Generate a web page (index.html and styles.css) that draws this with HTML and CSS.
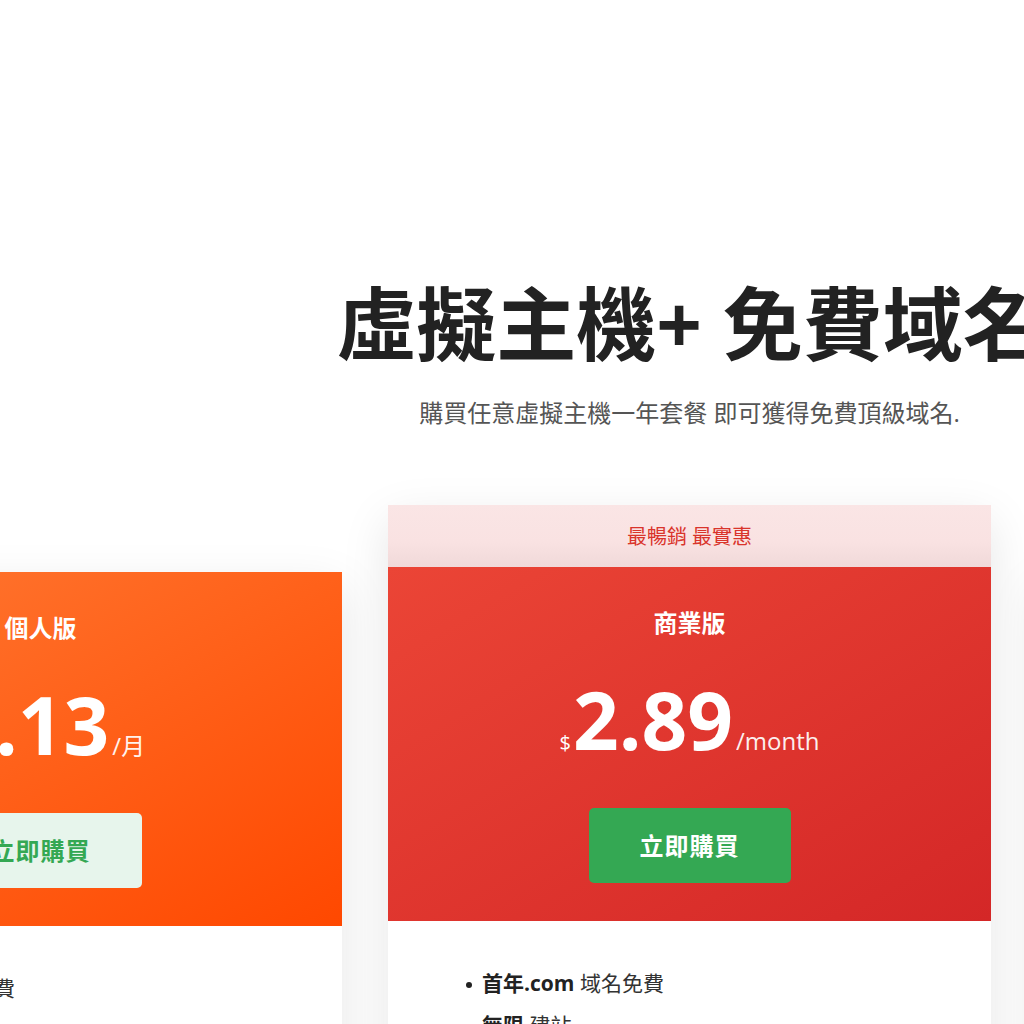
FILE: index.html
```html
<!DOCTYPE html>
<html>
<head>
    <meta charset="utf-8">
    <link rel="stylesheet" href="styles.css">
</head>
<body>
    <section class="pricing">
        <div class="pricing-inner">
            <h1 class="pricing-title">虛擬主機+ 免費域名</h1>
            <p class="pricing-subtitle">購買任意虛擬主機一年套餐 即可獲得免費頂級域名.</p>

            <div class="plans">
                <div class="plan plan-personal">
                    <div class="plan-head">
                        <h3 class="plan-name">個人版</h3>
                        <div class="plan-price"><span class="currency">$</span><span class="amount">1.13</span><span class="period">/月</span></div>
                        <a href="#" class="buy-btn">立即購買</a>
                    </div>
                    <ul class="plan-features">
                        <li><b>首年.com</b> 域名免費</li>
                        <li><b>無限</b> 建站</li>
                        <li><b>10GB</b> SSD 空間</li>
                        <li><b>免費</b> SSL 證書</li>
                    </ul>
                </div>

                <div class="plan plan-business featured">
                    <div class="plan-ribbon">最暢銷 最實惠</div>
                    <div class="plan-head">
                        <h3 class="plan-name">商業版</h3>
                        <div class="plan-price"><span class="currency">$</span><span class="amount">2.89</span><span class="period">/month</span></div>
                        <a href="#" class="buy-btn">立即購買</a>
                    </div>
                    <ul class="plan-features">
                        <li><b>首年.com</b> 域名免費</li>
                        <li><b>無限</b> 建站</li>
                        <li><b>無限</b> SSD 空間</li>
                        <li><b>免費</b> SSL 證書</li>
                    </ul>
                </div>

                <div class="plan plan-enterprise">
                    <div class="plan-head">
                        <h3 class="plan-name">企業版</h3>
                        <div class="plan-price"><span class="currency">$</span><span class="amount">5.45</span><span class="period">/月</span></div>
                        <a href="#" class="buy-btn">立即購買</a>
                    </div>
                    <ul class="plan-features">
                        <li><b>首年.com</b> 域名免費</li>
                        <li><b>無限</b> 建站</li>
                        <li><b>無限</b> SSD 空間</li>
                        <li><b>免費</b> SSL 證書</li>
                    </ul>
                </div>
            </div>
        </div>
    </section>
</body>
</html>
```

FILE: styles.css
```css
html, body {
    margin: 0;
    overflow: hidden;
    background: #fff;
}

body {
    font-family: "Open Sans", "Noto Sans CJK TC", sans-serif;
    color: #333;
}

.pricing-inner {
    width: 1379px;
    padding-top: 275px;
    text-align: center;
}

.pricing-title {
    margin: 0;
    font-size: 80px;
    line-height: 96px;
    font-weight: 700;
    color: #222;
}

.pricing-subtitle {
    margin: 24px 0 0;
    font-size: 24px;
    line-height: 36px;
    color: #555;
}

/* Plan cards */

.plans {
    display: flex;
    justify-content: center;
    align-items: flex-start;
    gap: 46px;
    margin-top: 74px;
}

.plan {
    flex: 0 0 603px;
    margin-top: 67px;
    background: #fff;
    box-shadow: 0 15px 45px rgba(0,0,0,0.1);
}

.plan.featured {
    margin-top: 0;
}

.plan-ribbon {
    height: 62px;
    line-height: 64px;
    font-size: 20px;
    color: #d9342b;
    background: linear-gradient(#fae5e5 0%, #f9e2e2 60%, #f0d9d9 100%);
}

.plan-head {
    padding: 39px 20px 38px;
    color: #fff;
}

.plan-personal .plan-head {
    background: linear-gradient(to bottom right, #ff7a34, #ff4800);
}

.plan-business .plan-head {
    background: linear-gradient(to bottom right, #eb4536, #d42727);
}

.plan-enterprise .plan-head {
    background: linear-gradient(to bottom right, #4a7cf0, #2a55d4);
}

.plan-name {
    margin: 0;
    font-size: 24px;
    line-height: 34px;
    font-weight: 700;
}

.plan-price {
    margin-top: 39px;
    height: 80px;
    font-size: 80px;
    line-height: 1;
    font-weight: 700;
}

.currency {
    font-size: 20px;
    font-weight: 400;
    margin-right: 2px;
}

.period {
    font-size: 24px;
    font-weight: 400;
    margin-left: 3px;
    opacity: 0.92;
}

.buy-btn {
    display: block;
    width: 202px;
    height: 75px;
    margin: 49px auto 0;
    line-height: 75px;
    border-radius: 5px;
    background: #34a853;
    color: #fff;
    font-size: 24px;
    font-weight: 700;
    letter-spacing: 1px;
    text-decoration: none;
}

.plan-personal .buy-btn,
.plan-enterprise .buy-btn {
    background: #e7f5ec;
    color: #34a853;
}

.plan-features {
    margin: 0;
    padding: 41px 20px 40px 78px;
    list-style: none;
    text-align: left;
}

.plan-features li {
    font-size: 21px;
    line-height: 42px;
    color: #333;
}

.plan-features li::before {
    content: "";
    display: inline-block;
    width: 6px;
    height: 6px;
    margin-right: 10px;
    border-radius: 50%;
    background: #222;
    vertical-align: middle;
}

.plan-features b {
    color: #222;
    font-weight: 700;
}
```
